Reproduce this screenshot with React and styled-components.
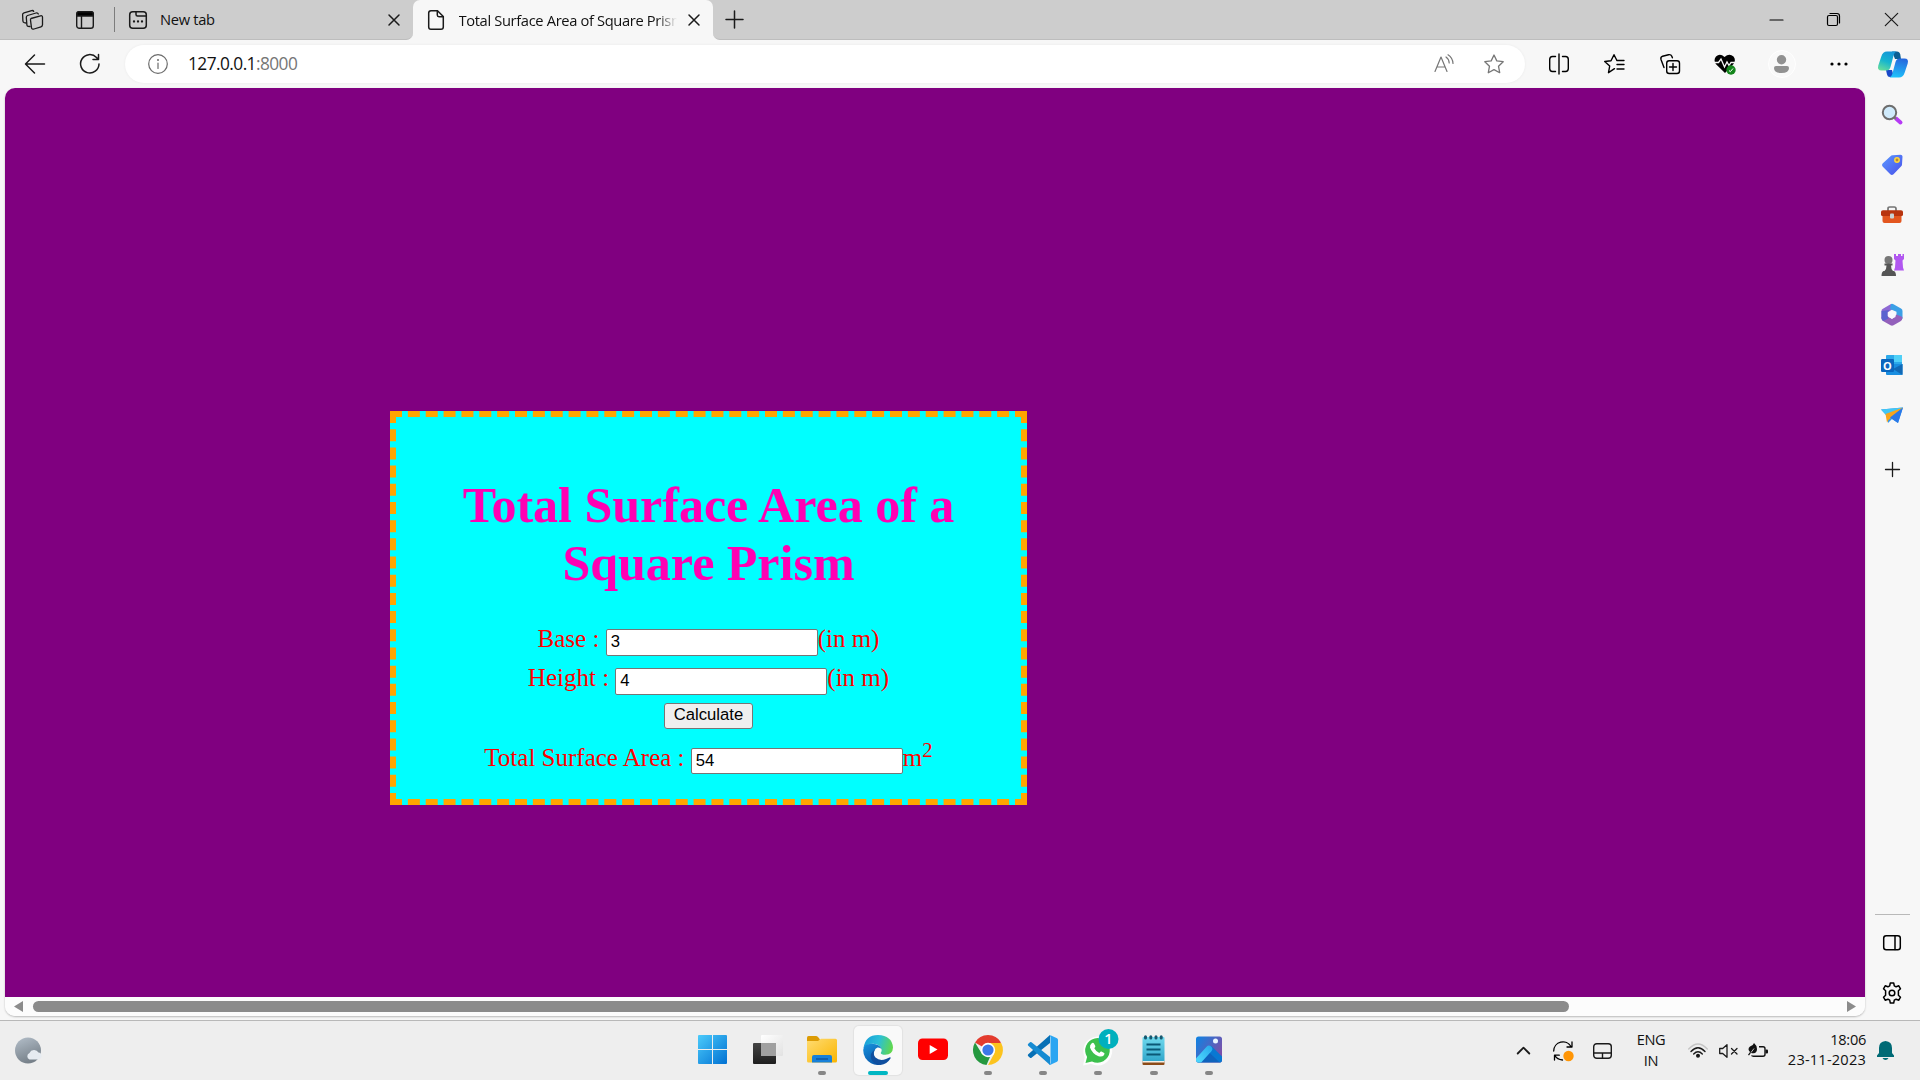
import React from "react";
import styled, { createGlobalStyle } from "styled-components";

const Global = createGlobalStyle`
  * { box-sizing: border-box; }
  html, body { margin: 0; padding: 0; overflow: hidden; }
  body { font-family: "Open Sans", "Noto Sans", sans-serif; color: #111; }
`;

const Screen = styled.div`
  width: 1920px;
  height: 1080px;
  display: flex;
  flex-direction: column;
  background: #f7f7f7;
  overflow: hidden;
`;

const Svg = styled.svg`
  display: block;
  flex: none;
  overflow: visible;
`;

const Slot = styled.div`
  flex: none;
  width: ${(p) => p.$w}px;
  height: ${(p) => (p.$h ? p.$h + "px" : "100%")};
  display: flex;
  align-items: center;
  justify-content: center;
`;

/* ---------- tab strip ---------- */
const TabStrip = styled.div`
  height: 40px;
  flex: none;
  display: flex;
  background: #f7f7f7;
`;
const StripLeft = styled.div`
  width: 413px;
  display: flex;
  align-items: center;
  background: #cdcdcd;
  border-bottom: 1px solid #bdbdbd;
  border-bottom-right-radius: 7px;
`;
const StripDivider = styled.div`
  width: 1px;
  height: 25px;
  background: #7c7c7c;
`;
const TabTitle = styled.div`
  flex: ${(p) => (p.$w ? "none" : "1")};
  width: ${(p) => (p.$w ? p.$w + "px" : "auto")};
  font-size: 14.7px;
  line-height: 20px;
  padding-bottom: 1px;
  letter-spacing: ${(p) => p.$ls}px;
  white-space: nowrap;
  overflow: hidden;
  ${(p) => p.$fade && "mask-image: linear-gradient(to right, #000 198px, transparent 218px);"}
`;
const ActiveTab = styled.div`
  width: 300px;
  display: flex;
  align-items: center;
  background: #f7f7f7;
  border-radius: 7px 7px 0 0;
`;
const TabBackdrop = styled.div`
  background: linear-gradient(#cdcdcd 50%, #f7f7f7 50%);
  display: flex;
`;
const StripRight = styled.div`
  flex: 1;
  display: flex;
  align-items: center;
  background: #cdcdcd;
  border-bottom: 1px solid #bdbdbd;
  border-bottom-left-radius: 7px;
`;
const Spacer = styled.div`
  flex: 1;
`;

/* ---------- toolbar ---------- */
const Toolbar = styled.div`
  height: 48px;
  flex: none;
  display: flex;
  align-items: center;
  background: #f7f7f7;
`;
const AddressBar = styled.div`
  width: 1400px;
  height: 38px;
  margin-right: 6px;
  border-radius: 19px;
  background: #fff;
  display: flex;
  align-items: center;
  box-shadow: 0 0 3px rgba(0, 0, 0, 0.06);
`;
const Url = styled.div`
  flex: 1;
  margin-left: -2px;
  font-size: 17.3px;
  letter-spacing: -0.55px;
  line-height: 24px;
  color: #111;
  span { color: #767676; }
`;
const Avatar = styled.div`
  width: 28px;
  height: 28px;
  border-radius: 50%;
  background: #f9f9f9;
  border: 1px solid #fff;
  display: flex;
  align-items: center;
  justify-content: center;
`;

/* ---------- main ---------- */
const Main = styled.div`
  height: 932px;
  flex: none;
  display: flex;
  padding-left: 5px;
`;
const Viewport = styled.div`
  width: 1860px;
  height: 928px;
  display: flex;
  flex-direction: column;
  border-radius: 10px;
  overflow: hidden;
  box-shadow: 0 1px 2px rgba(0, 0, 0, 0.25);
  background: #fcfcfc;
`;
const Page = styled.div`
  flex: 1;
  background: #800080;
  padding: 323px 0 0 385px;
`;
const Card = styled.div`
  width: 637px;
  height: 394px;
  background: #00ffff;
  border: 6px dashed orange;
  padding-top: 59px;
  text-align: center;
  font-family: "Liberation Serif", "Times New Roman", serif;
  font-size: 25px;
  color: #ff0000;
`;
const Heading = styled.h1`
  margin: 0 50px 33px;
  font-size: 50px;
  line-height: 58px;
  font-weight: bold;
  color: #ff00b3;
`;
const Field = styled.div`
  display: flex;
  justify-content: center;
  align-items: baseline;
  height: 27px;
  margin-bottom: ${(p) => p.$gap}px;
  line-height: 27px;
  white-space: pre;
  sup { font-size: 20.8px; line-height: 0; vertical-align: super; }
`;
const Input = styled.input`
  width: 212px;
  height: ${(p) => p.$h || 27}px;
  margin: 0;
  padding: 1px 4px;
  border: 1px solid #767676;
  border-radius: 2px;
  background: #fff;
  color: #000;
  font: 16.67px "Liberation Sans", Arial, sans-serif;
  outline: none;
`;
const Button = styled.button`
  display: block;
  width: 89px;
  height: 26px;
  margin: 0 auto 15px;
  padding: 0 0 2px;
  border: 1px solid #767676;
  border-radius: 3px;
  background: #efefef;
  color: #000;
  font: 16.67px "Liberation Sans", Arial, sans-serif;
`;
const ScrollBar = styled.div`
  height: 19px;
  flex: none;
  display: flex;
  align-items: center;
  background: #fcfcfc;
  padding: 0 9px;
`;
const Thumb = styled.div`
  width: 1536px;
  height: 11px;
  margin-left: 10px;
  border-radius: 6px;
  background: #8b8b8b;
`;

/* ---------- sidebar ---------- */
const Sidebar = styled.div`
  width: 54px;
  padding: 2px 0;
  display: flex;
  flex-direction: column;
  align-items: center;
`;
const SideRule = styled.div`
  width: 35px;
  height: 1px;
  background: #b9b9b9;
  margin-bottom: 3px;
`;

/* ---------- taskbar ---------- */
const Taskbar = styled.div`
  height: 60px;
  flex: none;
  display: flex;
  border-top: 1px solid #b8b8b8;
  background: #eeeeee;
`;
const Weather = styled.div`
  width: 684.5px;
  display: flex;
  align-items: center;
  padding-left: 14px;
`;
const Task = styled.div`
  width: 48px;
  height: 49px;
  margin: 5px 3.6px 0;
  display: flex;
  flex-direction: column;
  align-items: center;
  justify-content: space-between;
  padding-top: 9px;
  border-radius: 5px;
  background: ${(p) => (p.$active ? "#f9f9f9" : "transparent")};
  box-shadow: ${(p) => (p.$active ? "0 0 1px 1px rgba(0,0,0,0.05)" : "none")};
`;
const Pill = styled.div`
  width: ${(p) => p.$w}px;
  height: 4px;
  border-radius: 2px;
  background: ${(p) => (p.$w > 10 ? "#00b7c3" : "#868686")};
`;
const Lang = styled.div`
  width: 60px;
  padding-right: 2px;
  text-align: center;
  font-size: 14.6px;
  line-height: 20.5px;
  letter-spacing: -0.35px;
  padding-top: 8px;
`;
const Clock = styled.div`
  width: 93px;
  text-align: right;
  font-size: 14.6px;
  line-height: 20px;
  letter-spacing: -0.3px;
  padding-top: 8px;
  white-space: nowrap;
`;
const DateText = styled.span`
  letter-spacing: 0.2px;
`;

const Stroke = ({ w = 20, h = 20, c = "#1a1a1a", sw = 1.4, children }) => (
  <Svg width={w} height={h} viewBox={`0 0 ${w} ${h}`} fill="none" stroke={c} strokeWidth={sw} strokeLinecap="round" strokeLinejoin="round">
    {children}
  </Svg>
);

const Close = ({ s = 10 }) => (
  <Stroke w={s} h={s} sw={1.5}><path d={`M0 0L${s} ${s}M${s} 0L0 ${s}`} /></Stroke>
);
const star = "M10 1l2.8 5.9 6.4.8-4.7 4.5 1.2 6.5L10 15.6l-5.7 3.1 1.2-6.5L.8 7.700l6.400-.8z";

const Workspaces = () => (
  <Stroke w={22} h={20} sw={1.3}>
    <path d="M9 8.500l9.500-2.700q2-.5 2 1.500v7.500q0 1.500-1.500 2l-7 2.200q-2 .6-2.500-1.200l-1-7.600q-.2-1.400.5-1.700z" />
    <path d="M8 16.500l-2-.2Q5 16 4.900 15L4.300 7.500Q4.200 6 5.600 5.500L14 3q1.700-.5 2.300 1" />
    <path d="M4 13l-1.700-.3Q1 12.400.9 11L.6 4.800Q.5 3.400 2 2.900L9.700.6q1.500-.4 2 .8" />
  </Stroke>
);
const TabActions = () => (
  <Stroke w={18} h={18} sw={1.4}>
    <rect x=".7" y=".7" width="16.600" height="16.600" rx="2.600" />
    <path d="M1 1.500Q1 .7 3 .7h12q2 0 2.200 1.500V5H1z" fill="#000" />
    <path d="M5.500 5v12" />
  </Stroke>
);
const NewTabIcon = () => (
  <Stroke w={18} h={18} sw={1.500}>
    <rect x=".7" y=".7" width="16.600" height="16.600" rx="3" />
    <path d="M7 1v2.500Q7 5 8.500 5H17" />
    <path d="M5 10.500h.01M9 10.500h.01M13 10.500h.01" strokeWidth="2.300" />
  </Stroke>
);
const FileIcon = () => (
  <Stroke w={16} h={20} sw={1.500}>
    <path d="M3 .7h6.500L15.300 6.500V17q0 2.300-2.300 2.300H3Q.7 19.300.7 17V3Q.7.7 3 .7z" />
    <path d="M9.300 1v4q0 1.700 1.700 1.700h4" />
  </Stroke>
);

const Search = () => (
  <Svg width="22" height="22" viewBox="0 0 22 22">
    <path d="M15 14.500l4.500 4" stroke="#b63af5" strokeWidth="4" strokeLinecap="round" />
    <path d="M12 12l3 3" stroke="#777" strokeWidth="2" />
    <circle cx="8.500" cy="8.500" r="6.700" fill="#cfeafb" stroke="#6d6d6d" strokeWidth="2" />
  </Svg>
);
const Tag = () => (
  <Svg width="22" height="22" viewBox="0 0 22 22">
    <defs><linearGradient id="tg" x1="0" y1="0" x2="1" y2="1"><stop stopColor="#5b9bff" /><stop offset="1" stopColor="#494eea" /></linearGradient></defs>
    <path d="M11.500 1.300L19.500.7q2 0 2 1.800L21 10.500q0 1-.8 1.700l-7.700 8q-1.700 1.500-3.200 0l-7.700-7.700q-1.300-1.400 0-3L9.500 2.200q.8-.8 2-.9z" fill="url(#tg)" />
    <circle cx="16" cy="6" r="2.200" fill="#b78a39" stroke="#ffd83d" strokeWidth="1.500" />
  </Svg>
);
const Toolbox = () => (
  <Svg width="22" height="18" viewBox="0 0 22 18">
    <path d="M7 5V2.700Q7 1 8.700 1h4.600Q15 1 15 2.700V5" fill="none" stroke="#747474" strokeWidth="1.700" />
    <path d="M1.500 9h19v6q0 2-2 2h-15q-2 0-2-2z" fill="#e3561f" />
    <path d="M0 6q0-1.800 2-1.800h18q2 0 2 1.800v2.500q0 1.500-1.500 1.500h-19Q0 10 0 8.500z" fill="#b8340f" />
    <rect x="9" y="7.500" width="4" height="5" rx="1" fill="#c9d3d6" />
  </Svg>
);
const Chess = () => (
  <Svg width="23" height="24" viewBox="0 0 23 24">
    <path d="M13 1h2v2h2V1h3v2h1.500V1H23v5l-1.500 1.500.5 7 1 3H13l1-3 .5-7L13 6z" fill="#b157f0" />
    <circle cx="7.500" cy="7" r="4" fill="#777" />
    <path d="M3.500 10.500h8v2H10q0 4 2 5.500h1q2 1 2 5H.5q0-4 2-5h1q2-1.500 2-5.500h-2z" fill="#555" />
  </Svg>
);
const M365 = () => (
  <Svg width="22" height="22" viewBox="0 0 22 22">
    <path d="M10 0L1.500 5Q.5 5.500.5 7v8l6-3V8.500L15 3z" fill="#8d69d4" />
    <path d="M10 0q1.200-.5 2.500.2l7.500 4.300q1.500.9 1.500 2.500v8l-6-3.500v-3.700L9 5z" fill="#3b9fe6" />
    <path d="M.5 13q0 3 1.500 4l7.500 4.300q1.500.8 3 0l7-4q2-1.200 2-4.300l-6-2.500L11 15l-4.500-3z" fill="#9360bb" />
    <path d="M.5 7v7q0 2 1.800 3l5-2.500-.8-2.500v-4l2-2z" fill="#5b63cf" />
    <path d="M11 7.200l3.500 1.900v3.800L11 14.800l-3.500-1.900V9.100z" fill="#f8f7fd" />
  </Svg>
);
const OutlookO = styled.text`
  font: bold 11px "Open Sans", sans-serif;
`;
const Outlook = () => (
  <Svg width="22" height="22" viewBox="0 0 22 22">
    <rect x="5" y="1" width="16" height="13" rx="1" fill="#2ca9ea" />
    <path d="M13 1h8v7h-8z" fill="#50d0f7" />
    <path d="M5 12l8-2 8.500 0v10q0 1-1 1H6q-1 0-1-1z" fill="#1a8ee0" />
    <path d="M21.500 10v11L12 15z" fill="#1269b5" />
    <rect x="0" y="5" width="13" height="13" rx="1.300" fill="#0a66be" />
    <OutlookO x="6.500" y="15.500" textAnchor="middle" fill="#fff">O</OutlookO>
  </Svg>
);
const Plane = () => (
  <Svg width="22" height="17" viewBox="0 0 22 17">
    <path d="M0 2.500L22 .5 17 16l-6-4-4 4-1-7z" fill="#2e97ee" />
    <path d="M0 2.500L22 .5 6 9z" fill="#42c6f5" />
    <path d="M22 .5L4.500 7l1.500 8.500q1.500-3.500 4-4.500z" fill="#f7a51b" />
    <path d="M22 .5L9 10.500 17 16z" fill="#2a78e8" />
  </Svg>
);
const PanelIcon = () => (
  <Stroke w={18} h={16} sw={1.500} c="#000"><rect x=".7" y=".7" width="16.600" height="14" rx="2.500" /><path d="M12 1v13.500" /></Stroke>
);
const Gear = () => (
  <Stroke w={22} h={22} sw={1.500} c="#000">
    <circle cx="11" cy="11" r="2.800" />
    <path d="M9.300 1h3.400l.6 2.800 1.800 1 2.700-1 1.700 3-2.100 1.900 0 4.600L19.500 15.200l-1.700 3-2.700-1-1.800 1L12.700 21H9.300l-.6-2.800-1.800-1-2.700 1-1.700-3 2.100-1.900V8.700L2.500 6.800l1.700-3 2.700 1 1.800-1z" />
  </Stroke>
);

const Copilot = () => (
  <Svg width="30" height="27" viewBox="0 0 30 27">
    <defs>
      <linearGradient id="cpa" x1=".6" y1="0" x2=".2" y2="1"><stop stopColor="#1596d8" /><stop offset=".5" stopColor="#16b5cf" /><stop offset="1" stopColor="#67dd9b" /></linearGradient>
      <linearGradient id="cpb" x1=".6" y1="0" x2=".4" y2="1"><stop stopColor="#2567dd" /><stop offset="1" stopColor="#1ec1fa" /></linearGradient>
    </defs>
    <path d="M14 .5h5q2.500 0 3.300 3L23 8h-6z" fill="#0b5e94" />
    <path d="M8 19h6l2 7h-4q-2.500 0-3-2.500z" fill="#1849c8" />
    <path d="M9 .5h9.500q-2 .5-2.800 3.500L12.500 16q-1 3.500-4 3.500H3.500Q-1 19.500.3 14.500l3-9Q4.800.5 9 .5z" fill="url(#cpa)" />
    <path d="M21 26.500H11.500q2-.5 2.800-3.500L17.500 11q1-3.500 4-3.500h5q4.500 0 3.200 5l-3 9Q25.200 26.500 21 26.500z" fill="url(#cpb)" />
  </Svg>
);

const WindowsLogo = () => (
  <Svg width="29" height="29" viewBox="0 0 29 29">
    <defs><linearGradient id="wn" gradientUnits="userSpaceOnUse" x1="0" y1="0" x2="29" y2="29"><stop stopColor="#4bcbfb" /><stop offset="1" stopColor="#0070d2" /></linearGradient></defs>
    <path d="M1 0h13v14H0V1Q0 0 1 0zM15 0h13q1 0 1 1v13H15zM0 15h14v14H1q-1 0-1-1zM15 15h14v13q0 1-1 1H15z" fill="url(#wn)" />
  </Svg>
);
const TaskView = () => (
  <Svg width="30" height="30" viewBox="-1 0 30 30">
    <defs>
      <linearGradient id="tv" x1="0" y1="0" x2="0" y2="1"><stop stopColor="#444" /><stop offset="1" stopColor="#1e1e1e" /></linearGradient>
      <linearGradient id="tw" x1="0" y1="0" x2="1" y2="1"><stop stopColor="#fff" /><stop offset="1" stopColor="#e2e2e2" /></linearGradient>
    </defs>
    <rect x="0" y="8" width="23" height="21" rx="1" fill="url(#tv)" />
    <rect x="8" y="0" width="22" height="21" rx="1" fill="url(#tw)" />
    <rect x="8" y="8" width="15" height="13" fill="#a0a0a0" />
  </Svg>
);
const Folder = () => (
  <Svg width="30" height="29" viewBox="0 0 30 29">
    <defs><linearGradient id="fd" x1="0" y1="0" x2="1" y2="1"><stop stopColor="#ffdc73" /><stop offset="1" stopColor="#fab500" /></linearGradient></defs>
    <path d="M0 8V2.500Q0 1 1.500 1h7.500q1 0 2 1l2 2.500V8z" fill="#dc9b04" />
    <path d="M0 6h11l3-2.200h14.500Q30 3.800 30 5.300V26q0 1.500-1.500 1.500h-27Q0 27.500 0 26z" fill="url(#fd)" />
    <path d="M5 27.500V22q0-2 2-2h16q2 0 2 2v5.500z" fill="#1780d9" />
    <path d="M9 24h12" stroke="#0b4f9a" strokeWidth="1.300" />
  </Svg>
);
const Edge = () => (
  <Svg width="30" height="30" viewBox="0 0 30 30">
    <defs>
      <linearGradient id="ea" x1="0" y1=".3" x2="1" y2=".5"><stop stopColor="#189ed9" /><stop offset=".5" stopColor="#2bbfd7" /><stop offset="1" stopColor="#61d84c" /></linearGradient>
      <linearGradient id="eb" x1="0" y1="0" x2=".5" y2="1"><stop stopColor="#1893de" /><stop offset="1" stopColor="#0a59ac" /></linearGradient>
    </defs>
    <path d="M.5 13Q2.500 0 15 0q14 .5 15 12.500-.2 7-7.800 7.300-4.200-.1-4.500-1.800 1-1.300 1-3Q17.500 9 10 8.800 3.500 9 .5 13z" fill="url(#ea)" />
    <path d="M.2 15Q.5 8.500 9 8.700q8 .3 9.500 5.300-1.500-1.800-4-1.500-4.500 2-3.500 8.500 1.200 5.500 6.500 8.500Q13 31 8 28.200.3 23.500.2 15z" fill="url(#eb)" />
    <path d="M12 14.500q-2.800 4 .5 8 4.300 4 10.500 1.500l4-1.700q1 0 .5 1.200Q24 29 17.500 30q-7-.5-9.300-6-1.800-6 3.800-9.500z" fill="#104f9f" />
  </Svg>
);
const YouTube = () => (
  <Svg width="30" height="29" viewBox="0 0 30 29">
    <rect x="0" y="3.500" width="30" height="21.500" rx="4.500" fill="#f00" /><path d="M11.700 10v9l7.800-4.500z" fill="#fff" />
  </Svg>
);
const Chrome = () => (
  <Svg width="30" height="30" viewBox="0 0 30 30">
    <path d="M15 15L2 7.500A15 15 0 0 1 28 7.500z" fill="#e33b2e" />
    <path d="M15 15V8h13.200A15 15 0 0 1 15 30l6-11z" fill="#fcc31e" />
    <path d="M2 7.500L9 19l6 3 2 0-3.500 8A15 15 0 0 1 2 7.500z" fill="#24983f" />
    <circle cx="15" cy="15" r="7.200" fill="#fff" /><circle cx="15" cy="15" r="5.600" fill="#3c78e8" />
  </Svg>
);
const VSCode = () => (
  <Svg width="30" height="30" viewBox="0 0 30 30">
    <path d="M22 0L0 19.500q-.5 1 .3 1.700l1.700 1.500q.7.400 1.500 0L22 8z" fill="#0870b5" />
    <path d="M22 30L0 10.500q-.5-1 .3-1.700L2 7.300q.7-.4 1.500 0L22 22z" fill="#168bd2" />
    <path d="M21 30q1 0 2-.5l6-2.800q1-.5 1-1.700V5q0-1.200-1-1.700L23 .5Q22 0 21 .2q1.500 1 1.500 2v25.600Q22.500 29 21 30z" fill="#2aa5f2" />
  </Svg>
);
const BadgeNum = styled.text`
  font: 600 14.5px "Open Sans", sans-serif;
`;
const WhatsApp = () => (
  <Svg width="30" height="30" viewBox="0 0 30 30">
    <path d="M0 30.500l1.800-8A14.500 14.500 0 1 1 8 28.800z" fill="#fdfdfd" />
    <path d="M2.500 28l1.600-6A12.300 12.300 0 1 1 9 26.400z" fill="#3cc04d" />
    <path d="M8.500 8.500q1.500-1.500 2.500 0l1.300 2.500q.3.800-1 2.200 1.800 3.500 5 4.800 1.400-1.800 2.200-1.400l2.700 1.400q.8.600-.3 2.300-2 2-5.400.9Q9 18.500 7 12.500q-.3-2.600 1.500-4z" fill="#fff" />
    <circle cx="25.500" cy="4" r="10" fill="#00b0bd" />
    <BadgeNum x="25.500" y="9.300" textAnchor="middle" fill="#fff">1</BadgeNum>
  </Svg>
);
const Notepad = () => (
  <Svg width="23" height="30" viewBox="0 0 23 30">
    <defs><linearGradient id="np" x1="0" y1="0" x2="0" y2="1"><stop stopColor="#70d9ed" /><stop offset="1" stopColor="#31a7cb" /></linearGradient></defs>
    <path d="M.5 26h22v3q0 1-1 1h-20q-1 0-1-1z" fill="#8b4a17" />
    <path d="M.5 25h22v2.500H.5z" fill="#f3efe6" />
    <path d="M.5 3q0-1 1-1h20q1 0 1 1v23H.5z" fill="url(#np)" />
    <path d="M4.500 9.500h14M4.500 14.500h14M4.500 19.500h14" stroke="#0b5876" strokeWidth="1.800" />
    <path d="M3.500 1.700v1.200M8.800 1.700v1.200M14 1.700v1.200M19.200 1.700v1.200" stroke="#17586f" strokeWidth="3" strokeLinecap="round" />
  </Svg>
);
const Photos = () => (
  <Svg width="26" height="29" viewBox="0 0 26 29">
    <defs>
      <linearGradient id="ph" x1="0" y1="0" x2="1" y2=".6"><stop stopColor="#0c84e4" /><stop offset="1" stopColor="#7d4fa9" /></linearGradient>
      <linearGradient id="pm" gradientUnits="userSpaceOnUse" x1="2" y1="24" x2="17" y2="12"><stop stopColor="#4ad4fb" /><stop offset="1" stopColor="#27a9ec" /></linearGradient>
      <clipPath id="pc"><rect y="1.500" width="26" height="26" rx="2.500" /></clipPath>
    </defs>
    <rect y="1.500" width="26" height="26" rx="2.500" fill="url(#ph)" />
    <g clipPath="url(#pc)">
      <path d="M0 28L13 16l13 12z" fill="#0f63bd" />
      <path d="M14 14L27 26.500" stroke="#0878d2" strokeWidth="6" strokeLinecap="round" />
      <path d="M3 25L13 14" stroke="url(#pm)" strokeWidth="6.500" strokeLinecap="round" />
    </g>
    <circle cx="19.500" cy="6" r="2.500" fill="#e9f5ff" />
  </Svg>
);

const tasks = [
  [WindowsLogo, 0], [TaskView, 0], [Folder, 8], [Edge, 20], [YouTube, 0],
  [Chrome, 8], [VSCode, 8], [WhatsApp, 8], [Notepad, 8], [Photos, 8],
];
const sideApps = [Search, Tag, Toolbox, Chess, M365, Outlook, Plane];

export default function App() {
  return (
    <Screen>
      <Global />
      <TabStrip>
        <StripLeft>
          <Slot $w={65}><Workspaces /></Slot>
          <Slot $w={40}><TabActions /></Slot>
          <Slot $w={18}><StripDivider /></Slot>
          <Slot $w={29}><NewTabIcon /></Slot>
          <Slot $w={8} />
          <TabTitle $ls={-0.3}>New tab</TabTitle>
          <Slot $w={38}><Close /></Slot>
        </StripLeft>
        <TabBackdrop>
          <ActiveTab>
            <Slot $w={45.500}><FileIcon /></Slot>
            <TabTitle $w={218} $ls={-0.35} $fade>Total Surface Area of Square Prism</TabTitle>
            <Slot $w={34}><Close /></Slot>
          </ActiveTab>
        </TabBackdrop>
        <StripRight>
          <Slot $w={42}><Stroke w={17} h={17} sw={1.500}><path d="M8.500 0v17M0 8.500h17" /></Stroke></Slot>
          <Spacer />
          <Slot $w={57}><Stroke w={13} h={2} sw={1.200} c="#000"><path d="M0 1h13" /></Stroke></Slot>
          <Slot $w={57}><Stroke w={13} h={13} sw={1.200} c="#000"><rect x=".5" y="2.500" width="10" height="10" rx="1.500" /><path d="M3 .5h7q2.500 0 2.500 2.500v7" /></Stroke></Slot>
          <Slot $w={58}><Stroke w={13} h={13} sw={1.200}><path d="M.3.3l12.400 12.400M12.700.3L.3 12.700" /></Stroke></Slot>
        </StripRight>
      </TabStrip>

      <Toolbar>
        <Slot $w={70}><Stroke sw={1.500}><path d="M19.500 10H.7M9.500 1L.5 10l9 9" /></Stroke></Slot>
        <Slot $w={40}><Stroke sw={1.500}><path d="M19 10A9.200 9.200 0 1 1 16.500 3.500L18 5.300M18.500.5v5h-5.500" /></Stroke></Slot>
        <Slot $w={15} />
        <AddressBar>
          <Slot $w={65}>
            <Stroke c="#6b6b6b" sw={1.200}><circle cx="10" cy="10" r="9.300" /><path d="M10 9v5.500" /><path d="M10 6h.01" strokeWidth="2" /></Stroke>
          </Slot>
          <Url>127.0.0.1<span>:8000</span></Url>
          <Slot $w={50}>
            <Stroke c="#767676" sw={1.200}>
              <path d="M1 17.500L7 3l6 14.500M3 13h8" /><path d="M12 3q3 2 3.200 6M14 .8q4.700 3 5 8.700" />
            </Stroke>
          </Slot>
          <Slot $w={50}><Stroke c="#767676" sw={1.300}><path d={star} /></Stroke></Slot>
          <Slot $w={6} />
        </AddressBar>
        <Slot $w={55}><Stroke sw={1.400} c="#000"><path d="M10 0v20M6.500 2.500h-3Q.7 2.500.7 5.500v9q0 3 2.800 3h3M13.500 2.500h3q2.800 0 2.800 3v9q0 3-2.800 3h-3" /></Stroke></Slot>
        <Slot $w={56}><Stroke sw={1.400} c="#000"><path d="M10.500 14.700l-6 4 1.200-6.700L.7 7.500l6.300-.8L10 .7l2.800 5.500M12.800 6.500H20M13 10.500h7M13 15h7" /></Stroke></Slot>
        <Slot $w={55}>
          <Stroke sw={1.400} c="#000">
            <rect x="6.700" y="6.700" width="12.800" height="12.800" rx="2.500" /><path d="M13 9.500v7M9.500 13h7" />
            <path d="M4 13.500L1 5.500Q.3 3 2.600 2.200L8.500.7q2.500-.5 3.300 1.600l.6 1.500" />
          </Stroke>
        </Slot>
        <Slot $w={56}>
          <Svg width="22" height="20" viewBox="0 0 22 20">
            <path d="M11 19L1.800 10Q-.8 6 2 2.500 6-1 10.500 3q4.800-4 9-.5 2.800 3.500 0 7.500z" fill="#000" />
            <path d="M0 8.500h4.500L7 5l3.500 8 2.500-5 2 3.500 2-3H21" fill="none" stroke="#f7f7f7" strokeWidth="1.300" />
            <circle cx="17" cy="16" r="4.700" fill="#13851b" /><path d="M15 16.500l1.300 1.200L19 14.500" fill="none" stroke="#fff" strokeWidth="1" />
          </Svg>
        </Slot>
        <Slot $w={57}>
          <Avatar><Svg width="15" height="18" viewBox="0 0 15 18" fill="#919191"><circle cx="7.500" cy="4.700" r="4.700" /><path d="M2 11h11q2 0 2 2 0 5-7.500 5T0 13q0-2 2-2z" /></Svg></Avatar>
        </Slot>
        <Slot $w={58}><Svg width="18" height="4" viewBox="0 0 18 4"><circle cx="2" cy="2" r="1.600" /><circle cx="9" cy="2" r="1.600" /><circle cx="16" cy="2" r="1.600" /></Svg></Slot>
        <Slot $w={49}><Copilot /></Slot>
      </Toolbar>

      <Main>
        <Viewport>
          <Page>
            <Card>
              <Heading>Total Surface Area of a Square Prism</Heading>
              <Field $gap={12}>{"Base : "}<Input defaultValue="3" />(in m)</Field>
              <Field $gap={12}>{"Height : "}<Input defaultValue="4" />(in m)</Field>
              <Button>Calculate</Button>
              <Field $gap={0}>{"Total Surface Area : "}<Input $h={26} defaultValue="54" /><span>m<sup>2</sup></span></Field>
            </Card>
          </Page>
          <ScrollBar>
            <Svg width="9" height="11" viewBox="0 0 9 11"><path d="M9 0v11L0 5.500z" fill="#8b8b8b" /></Svg>
            <Thumb />
            <Spacer />
            <Svg width="9" height="11" viewBox="0 0 9 11"><path d="M0 0v11l9-5.500z" fill="#8b8b8b" /></Svg>
          </ScrollBar>
        </Viewport>
        <Sidebar>
          {sideApps.map((Icon, i) => <Slot key={i} $w={54} $h={50}><Icon /></Slot>)}
          <Slot $w={54} $h={58}><Stroke w={15} h={15} sw={1.300}><path d="M7.500.5v14M.5 7.500h14" /></Stroke></Slot>
          <Spacer />
          <SideRule />
          <Slot $w={54} $h={50}><PanelIcon /></Slot>
          <Slot $w={54} $h={50}><Gear /></Slot>
        </Sidebar>
      </Main>

      <Taskbar>
        <Weather>
          <Svg width="29" height="27" viewBox="0 0 29 27">
            <defs><linearGradient id="wt" x1="0" y1="0" x2=".4" y2="1"><stop stopColor="#b4bfca" /><stop offset="1" stopColor="#77818a" /></linearGradient></defs>
            <circle cx="14" cy="13.500" r="13" fill="url(#wt)" />
            <path d="M15.500 22.500a3.500 3.500 0 0 1 0-6.500 5 5 0 0 1 9-.5 3.600 3.600 0 0 1 .5 7z" fill="#e6ebf1" />
          </Svg>
        </Weather>
        {tasks.map(([Icon, pill], i) => (
          <Task key={i} $active={pill === 20}><Icon />{pill ? <Pill $w={pill} /> : null}</Task>
        ))}
        <Spacer />
        <Slot $w={40}><Stroke w={13} h={7} sw={1.800}><path d="M.7 6.500l5.800-5.800 5.800 5.800" /></Stroke></Slot>
        <Slot $w={40}>
          <Stroke sw={1.300} c="#000">
            <path d="M.7 10A9.300 9.300 0 0 1 18 5.500M19 1v5h-5M9.500 19Q4 18.500 2 14.500M1.500 19v-4.800h4.800" />
            <circle cx="15.500" cy="15" r="5.200" fill="#ff9505" stroke="none" />
          </Stroke>
        </Slot>
        <Slot $w={39}><Stroke w={19} h={16} sw={1.400}><rect x=".7" y=".7" width="17.600" height="14.600" rx="3" /><path d="M1 10h17M9.500 10v5" /></Stroke></Slot>
        <Lang>ENG<br />IN</Lang>
        <Slot $w={32}>
          <Stroke sw={1.400} h={15}>
            <path d="M.7 6Q10-4 19.300 6" stroke="#c5c5c5" /><path d="M3 8.500Q10 1 17 8.500M5.700 11Q10 6.500 14.300 11" /><circle cx="10" cy="12.700" r="1.300" fill="#111" />
          </Stroke>
        </Slot>
        <Slot $w={29}><Stroke w={19} h={14} sw={1.300}><path d="M.7 4.500h3L8 .7v12.600L3.700 9.500h-3zM12.500 4.500l5.500 5.500M18 4.500L12.500 10" /></Stroke></Slot>
        <Slot $w={30}>
          <Svg width="20" height="16" viewBox="0 0 20 16">
            <path d="M11 3.700H15q2 0 2 2v5.600q0 2-2 2H5.500q-1.500 0-2-.8" fill="none" stroke="#111" strokeWidth="1.400" />
            <rect x="17.500" y="6.500" width="2.500" height="4" rx="1" fill="#111" />
            <path d="M6 0q3 2.500 3 6 0 4-3.500 4.300Q4 10.500 3 9.700L1 12.500 0 11.800 2 9Q-1 6 2 3.500 5.500 2 6 0z" fill="#111" />
            <path d="M3 9.500L6 5.500" stroke="#eee" strokeWidth=".8" />
          </Svg>
        </Slot>
        <Clock>18:06<br /><DateText>23-11-2023</DateText></Clock>
        <Slot $w={38}>
          <Svg width="17" height="19" viewBox="0 0 17 19"><path d="M8.500 0Q15 .5 15 7v5l2 2.500V16H0v-1.500L2 12V7Q2 .5 8.500 0zM5.500 17h6q-1 2-3 2t-3-2z" fill="#006a75" /></Svg>
        </Slot>
        <Slot $w={16} />
      </Taskbar>
    </Screen>
  );
}
